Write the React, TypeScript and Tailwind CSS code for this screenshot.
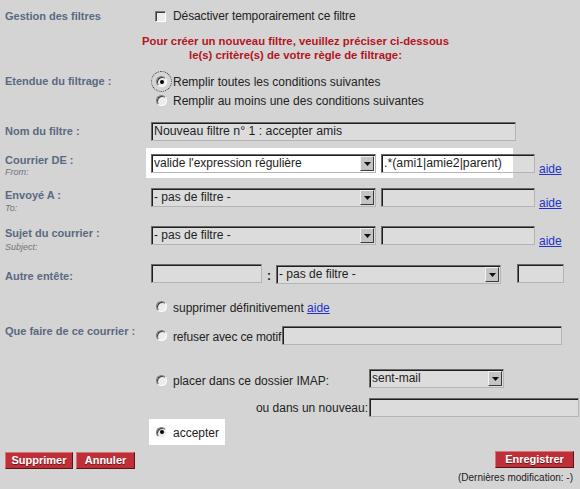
import React from "react";

const LABEL = "text-[#5a6982] font-bold text-[11px] leading-[13px] whitespace-nowrap";
const SUB = "text-[#74747c] italic text-[9px] leading-[11px]";
const SUNKEN =
  "border border-t-[#6a6a6a] border-l-[#6a6a6a] border-b-[#b4b4b4] border-r-[#b4b4b4] shadow-[inset_1px_1px_0_#1e1e1e]";

function Radio({ checked = false, focus = false }: { checked?: boolean; focus?: boolean }) {
  return (
    <span
      className={
        "shrink-0 w-[11px] h-[11px] rounded-full bg-[#ececec] border border-t-[#7c7c7c] border-l-[#7c7c7c] border-b-[#ffffff] border-r-[#ffffff] shadow-[inset_1px_1px_0_#3c3c3c] flex items-center justify-center " +
        (focus ? "outline outline-1 outline-dotted outline-[#303030] outline-offset-[4px]" : "")
      }
    >
      {checked && <span className="w-[4px] h-[4px] rounded-full bg-black" />}
    </span>
  );
}

function Select({ value, w, bg = "bg-[#dcdcdc]" }: { value: string; w: string; bg?: string }) {
  return (
    <div className={`${w} h-[19px] ${SUNKEN} ${bg} flex items-center shrink-0 pl-[2px] pr-[1px] py-[1px]`}>
      <span className="flex-1 text-[12px] leading-[15px] text-[#1e1e1e] whitespace-nowrap overflow-hidden">{value}</span>
      <span className="w-[14px] h-[15px] bg-[#c4c4c4] border border-t-[#f2f2f2] border-l-[#f2f2f2] border-b-[#3a3a3a] border-r-[#3a3a3a] flex items-center justify-center">
        <svg width="7" height="4" viewBox="0 0 7 4">
          <path d="M0 0H7L3.5 4Z" fill="#111" />
        </svg>
      </span>
    </div>
  );
}

function Input({ w, value = "", bg = "bg-[#dcdcdc]" }: { w: string; value?: string; bg?: string }) {
  return (
    <div className={`${w} h-[19px] ${SUNKEN} ${bg} flex items-center shrink-0 pl-[2px]`}>
      <span className="text-[12.3px] leading-[15px] text-[#1e1e1e] whitespace-nowrap overflow-hidden">{value}</span>
    </div>
  );
}

function Aide() {
  return <span className="text-[#2230cc] underline text-[12px] leading-[14px]">aide</span>;
}

function Button({ children, w }: { children: React.ReactNode; w: string }) {
  return (
    <div
      className={`${w} h-[17px] bg-[#bf2f38] border border-t-[#d9737a] border-l-[#d9737a] border-b-[#561416] border-r-[#561416] flex items-center justify-center text-white font-bold text-[11px] leading-[13px] [text-shadow:0_1px_0_#6a1a1e]`}
    >
      {children}
    </div>
  );
}

export default function App() {
  return (
    <div className="w-[580px] h-[489px] overflow-hidden bg-[#d4d4d4] font-['Liberation_Sans',Arial,sans-serif] text-[12px] text-[#222] flex flex-col">
      {/* Gestion des filtres */}
      <div className="mt-[8px] h-[16px] flex items-center">
        <div className={`w-[151px] pl-[5px] ${LABEL}`}>Gestion des filtres</div>
        <span className="ml-[4px] w-[11px] h-[11px] bg-[#ececec] border border-t-[#7c7c7c] border-l-[#7c7c7c] border-b-[#ffffff] border-r-[#ffffff] shadow-[inset_1px_1px_0_#3c3c3c]" />
        <span className="ml-[7px] leading-[14px] whitespace-nowrap tracking-[-0.1px]">Désactiver temporairement ce filtre</span>
      </div>

      {/* Red info */}
      <div className="mt-[10px] pl-[11px] text-center text-[#b5141e] font-bold text-[11.3px] leading-[14px]">
        Pour créer un nouveau filtre, veuillez préciser ci-dessous
        <br />
        le(s) critère(s) de votre règle de filtrage:
      </div>

      {/* Etendue */}
      <div className="mt-[10px] flex">
        <div className={`w-[151px] pl-[5px] h-[19px] flex items-center ${LABEL}`}>Etendue du filtrage :</div>
        <div className="flex flex-col">
          <div className="h-[19px] flex items-center">
            <span className="ml-[5px]">
              <Radio checked focus />
            </span>
            <span className="ml-[6px] leading-[14px] whitespace-nowrap">Remplir toutes les conditions suivantes</span>
          </div>
          <div className="h-[19px] flex items-center">
            <span className="ml-[5px]">
              <Radio />
            </span>
            <span className="ml-[6px] leading-[14px] whitespace-nowrap">Remplir au moins une des conditions suivantes</span>
          </div>
        </div>
      </div>

      {/* Nom du filtre */}
      <div className="mt-[12px] h-[19px] flex items-center">
        <div className={`w-[151px] pl-[5px] ${LABEL}`}>Nom du filtre :</div>
        <Input w="w-[365px]" value="Nouveau filtre n° 1 : accepter amis" />
      </div>

      {/* Courrier DE */}
      <div className="mt-[7px] h-[30px] flex">
        <div className="w-[151px] pl-[5px] pt-[6px]">
          <div className={LABEL}>Courrier DE :</div>
          <div className={SUB}>From:</div>
        </div>
        <div className="-ml-[5px] w-[367px] h-[30px] bg-white pl-[5px] pt-[6px] flex items-start">
          <Select w="w-[225px]" value="valide l'expression régulière" bg="bg-white" />
          <div className="ml-[5px]">
            <Input
              w="w-[154px]"
              value=".*(ami1|amie2|parent)"
              bg="bg-[linear-gradient(to_right,#ffffff_131px,#dcdcdc_131px)]"
            />
          </div>
          <span className="ml-[4px] pt-[6px] shrink-0">
            <Aide />
          </span>
        </div>
      </div>

      {/* Envoyé A */}
      <div className="mt-[10px] h-[26px] flex items-start">
        <div className="w-[151px] pl-[5px] pt-[1px]">
          <div className={LABEL}>Envoyé A :</div>
          <div className={`${SUB} mt-[1px]`}>To:</div>
        </div>
        <Select w="w-[225px]" value="- pas de filtre -" />
        <div className="ml-[5px]">
          <Input w="w-[154px]" />
        </div>
        <span className="ml-[4px] pt-[6px]">
          <Aide />
        </span>
      </div>

      {/* Sujet */}
      <div className="mt-[12px] h-[26px] flex items-start">
        <div className="w-[151px] pl-[5px] pt-[1px]">
          <div className={LABEL}>Sujet du courrier :</div>
          <div className={`${SUB} mt-[2px]`}>Subject:</div>
        </div>
        <Select w="w-[225px]" value="- pas de filtre -" />
        <div className="ml-[5px]">
          <Input w="w-[154px]" />
        </div>
        <span className="ml-[4px] pt-[6px]">
          <Aide />
        </span>
      </div>

      {/* Autre entête */}
      <div className="mt-[12px] h-[21px] flex items-start">
        <div className={`w-[151px] pl-[5px] pt-[6px] ${LABEL}`}>Autre entête:</div>
        <Input w="w-[111px]" />
        <span className="w-[14px] pt-[5px] text-center font-bold leading-[14px]">:</span>
        <div className="mt-[1px]">
          <Select w="w-[225px]" value="- pas de filtre -" />
        </div>
        <div className="ml-[16px]">
          <Input w="w-[47px]" />
        </div>
      </div>

      {/* Actions */}
      <div className="mt-[13px] h-[17px] flex items-center">
        <div className="w-[151px]" />
        <span className="ml-[5px]">
          <Radio />
        </span>
        <span className="ml-[6px] pt-[2px] leading-[14px] whitespace-nowrap">
          supprimer définitivement <Aide />
        </span>
      </div>

      <div className="mt-[11px] h-[19px] flex items-center">
        <div className={`w-[151px] pl-[5px] -mt-[8px] ${LABEL}`}>Que faire de ce courrier :</div>
        <span className="ml-[5px]">
          <Radio />
        </span>
        <span className="ml-[6px] w-[109px] pt-[2px] leading-[14px] whitespace-nowrap tracking-[-0.15px]">refuser avec ce motif</span>
        <Input w="w-[280px]" />
      </div>

      <div className="mt-[24px] h-[19px] flex items-center">
        <div className="w-[151px]" />
        <span className="ml-[5px] mt-[3px]">
          <Radio />
        </span>
        <span className="ml-[6px] w-[196px] pt-[5px] leading-[14px] whitespace-nowrap">placer dans ce dossier IMAP:</span>
        <Select w="w-[135px]" value="sent-mail" />
      </div>

      <div className="mt-[10px] h-[19px] flex items-center">
        <div className="w-[369px] pr-[1px] text-right leading-[14px] whitespace-nowrap">ou dans un nouveau:</div>
        <Input w="w-[210px]" />
      </div>

      <div className="mt-[2px] h-[26px] flex">
        <div className="w-[149px]" />
        <div className="w-[76px] h-[26px] bg-white flex items-center">
          <span className="ml-[7px]">
            <Radio checked />
          </span>
          <span className="ml-[6px] pt-[2px] leading-[14px]">accepter</span>
        </div>
      </div>

      {/* Buttons */}
      <div className="mt-[6px] h-[18px] flex items-start pl-[5px] pr-[6px]">
        <div className="mt-[1px] flex gap-[3px]">
          <Button w="w-[68px]">Supprimer</Button>
          <Button w="w-[59px]">Annuler</Button>
        </div>
        <div className="ml-auto">
          <Button w="w-[79px]">Enregistrer</Button>
        </div>
      </div>

      <div className="mt-[3px] pr-[7px] text-right text-[10px] leading-[12px] text-[#222] whitespace-nowrap">
        (Dernières modification: -)
      </div>
    </div>
  );
}
